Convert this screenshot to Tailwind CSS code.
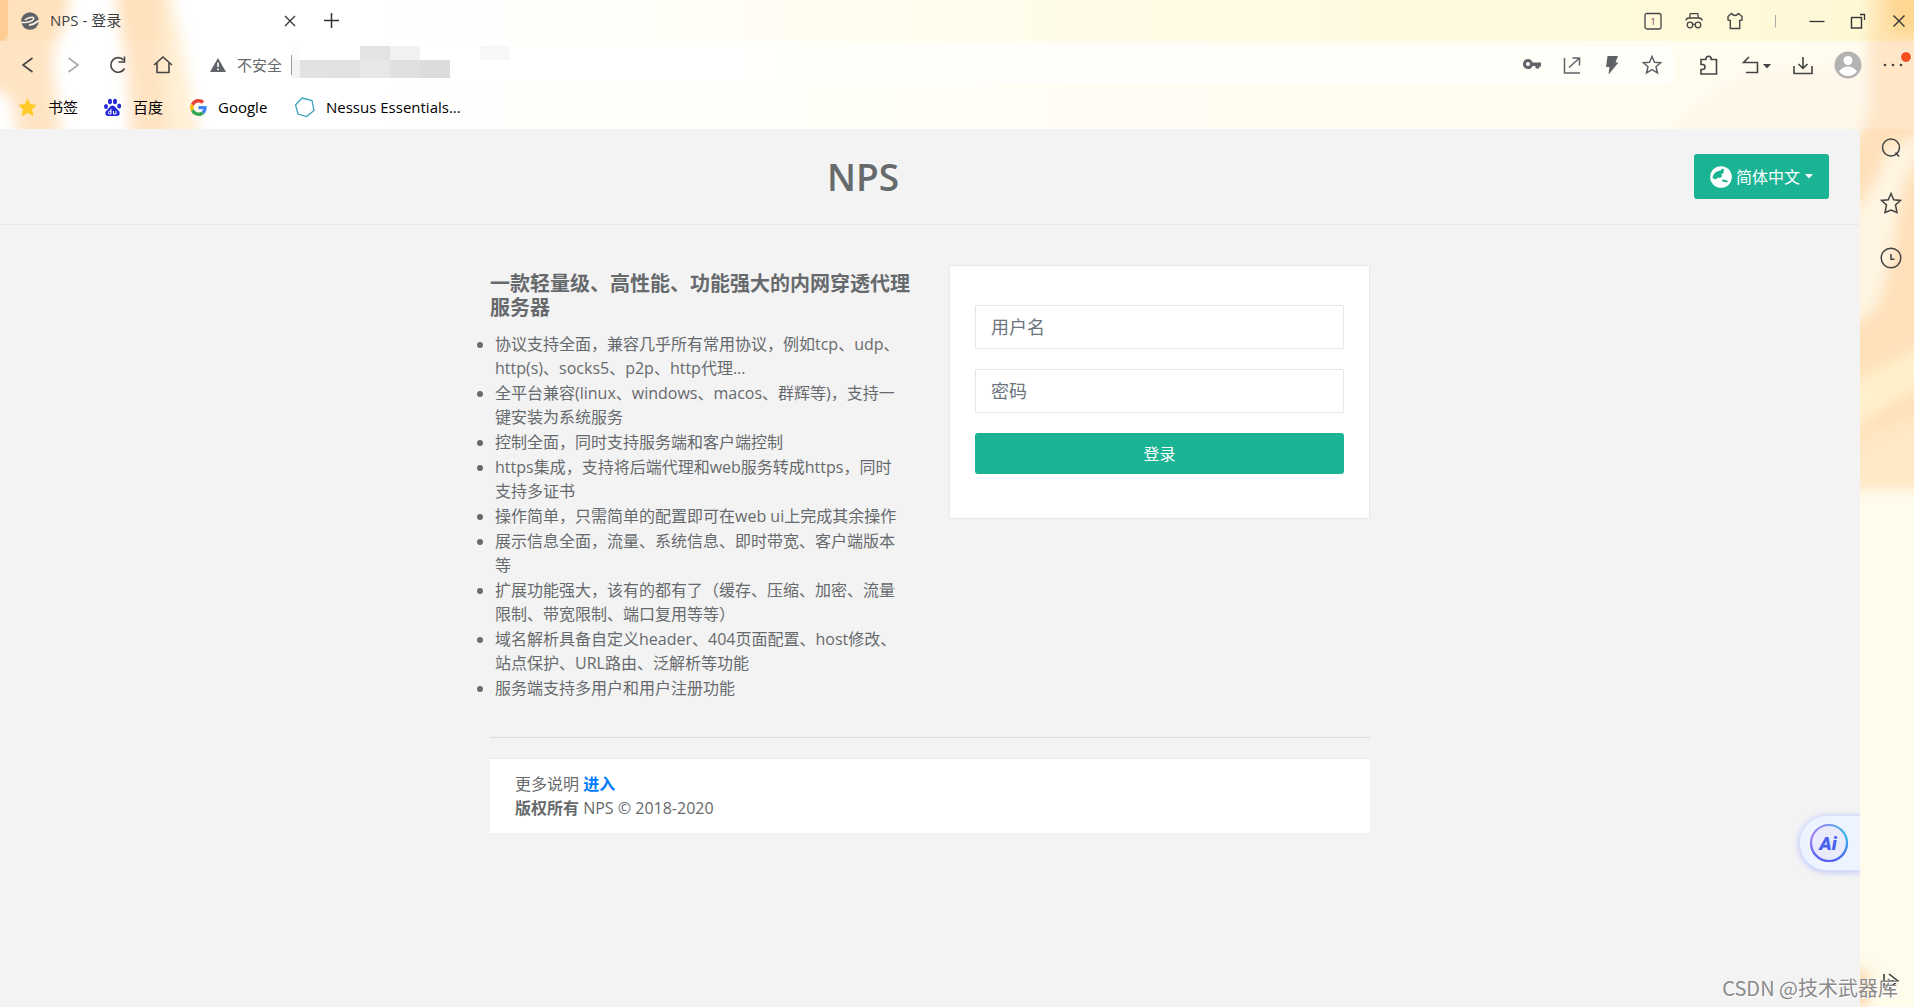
<!DOCTYPE html>
<html lang="zh-CN">
<head>
<meta charset="utf-8">
<meta name="viewport" content="width=device-width, initial-scale=1">
<title>NPS - 登录</title>
<script src="https://cdn.jsdelivr.net/npm/@tailwindcss/browser@4"></script>
</head>
<body class="relative flex min-h-screen flex-col overflow-x-hidden bg-linear-to-r from-white from-20% via-[#fffdf0] via-60% to-[#fffcec] font-['Open_Sans','Noto_Sans_CJK_SC',sans-serif] text-[#676a6c]">

<!-- Browser theme artwork -->
<svg class="absolute left-0 top-0 -z-10" width="260" height="129" aria-hidden="true">
  <defs><filter id="soft" x="-30%" y="-30%" width="160%" height="160%"><feGaussianBlur stdDeviation="7"/></filter></defs>
  <g filter="url(#soft)" fill="#ffdeb5">
    <path d="M-30-30H72L66 25Q48 45 54 80L64 160H22L12 100-30 75Z"/>
    <path d="M112-30H165Q175 20 185 60 190 100 205 160H130Q130 90 124 50Z"/>
    <path d="M160-30Q185 30 200 160H170Z" fill="#ffeccb"/>
  </g>
</svg>
<svg class="absolute right-0 top-0 -z-10" width="260" height="1007" aria-hidden="true">
  <defs><filter id="haze" x="-30%" y="-10%" width="160%" height="120%"><feGaussianBlur stdDeviation="7"/></filter></defs>
  <g filter="url(#haze)">
    <path d="M0 150Q60 70 130 70L215 60V150Z" fill="#fff6e4"/>
    <path d="M222-40H300V490H190V150Q218 130 216 90 210 40 222-40Z" fill="#ffe0b9"/>
    <path d="M232-30H300V35H236Z" fill="#ffcd8b"/>
    <path d="M300 120Q256 150 244 210 240 260 222 310L190 330V220Q225 190 232 150Z" fill="#fff5e2"/>
    <path d="M300 325Q240 365 190 385V440Q250 385 300 375Z" fill="#fff1cc"/>
    <path d="M300 405Q240 420 190 450V490H300Z" fill="#ffe8c6"/>
    <path d="M190 497H300V980H190Z" fill="#fffcec"/>
    <path d="M195 970H214V1007H195Z" fill="#ffd6a8"/>
  </g>
</svg>

<!-- Title bar -->
<header class="flex h-[41px] items-center bg-linear-to-r from-transparent from-30% to-[#fff0a0]/30 pr-[6px]">
  <div class="h-full w-2 rounded-br-lg bg-[#ffc684]/70"></div>
  <div class="flex h-full w-[304px] items-center rounded-t-lg bg-white/10 pl-[13px] pr-4 text-[#3c4043]">
    <svg width="18" height="18" viewBox="0 0 18 18"><circle cx="9" cy="9" r="8.800" fill="#5f6368"/><path d="M3.800 7.800Q8 4.800 11.500 5.200 14 6 11.500 8.300 9 10 4.500 10.500" fill="none" stroke="#fff0dd" stroke-width="1.500"/><path d="M18 8.500Q13 12.600 8 13.200" fill="none" stroke="#fff0dd" stroke-width="1.800"/><path d="M0 10.500 4.500 10.500" stroke="#fff0dd" stroke-width="1.500"/></svg>
    <span class="ml-[11px] flex-1 text-[15px]">NPS - 登录</span>
    <button aria-label="关闭标签页"><svg width="12" height="12" viewBox="0 0 12 12"><path d="M1 1 11 11M11 1 1 11" stroke="#333" stroke-width="1.300"/></svg></button>
  </div>
  <button aria-label="新建标签页" class="ml-3"><svg width="15" height="15" viewBox="0 0 15 15"><path d="M7.500 0V15M0 7.500H15" stroke="#333" stroke-width="1.500"/></svg></button>
  <div class="ml-auto flex items-center gap-[23px]">
    <button aria-label="标签页数量"><svg width="18" height="18" viewBox="0 0 18 18"><rect x="1" y="1.500" width="16" height="15.500" rx="2" fill="none" stroke="#444" stroke-width="1.300"/><text x="9" y="12.500" font-size="9" text-anchor="middle" fill="#7a3050">1</text></svg></button>
    <button aria-label="无痕模式"><svg width="18" height="18" viewBox="0 0 18 18" fill="none" stroke="#444" stroke-width="1.300"><path d="M1 8.500Q1 6 4.500 6L5.300 1.700H12.700L13.500 6Q17 6 17 8.500M4 6H14"/><circle cx="5" cy="13" r="2.800"/><circle cx="13" cy="13" r="2.800"/><path d="M7.800 12.500Q9 11.800 10.200 12.500"/></svg></button>
    <button aria-label="主题"><svg width="18" height="18" viewBox="0 0 18 18"><path d="M5.500 1.500Q9 5.500 12.500 1.500L16 4.500V8L13.700 8.500V16.500H4.300V8.500L2 8V4.500Z" fill="none" stroke="#444" stroke-width="1.400"/></svg></button>
    <svg width="18" height="18" viewBox="0 0 18 18"><path d="M8.500 3V15.500" stroke="#aaa" stroke-width="1"/></svg>
    <button aria-label="最小化"><svg width="18" height="18" viewBox="0 0 18 18"><path d="M1.500 9.500H16.500" stroke="#333" stroke-width="1.300"/></svg></button>
    <button aria-label="还原"><svg width="18" height="18" viewBox="0 0 18 18" fill="none" stroke="#333"><rect x="2.500" y="5.500" width="10" height="10.500" stroke-width="1.400"/><path d="M11 2.500H15.500V8" stroke-width="1.300"/></svg></button>
    <button aria-label="关闭"><svg width="18" height="18" viewBox="0 0 18 18"><path d="M3.500 3.500 14.500 14.500M14.500 3.500 3.500 14.500" stroke="#333" stroke-width="1.400"/></svg></button>
  </div>
</header>

<!-- Address row -->
<nav class="flex h-12 items-center bg-white/20 pl-[18px] pr-[2px]">
  <div class="flex gap-[25px]">
    <button aria-label="后退"><svg width="20" height="20" viewBox="0 0 20 20"><path d="M14.500 3 5 10 14.500 17" fill="none" stroke="#444" stroke-width="1.600"/></svg></button>
    <button aria-label="前进"><svg width="20" height="20" viewBox="0 0 20 20"><path d="M5.500 3 15 10 5.500 17" fill="none" stroke="#aaa" stroke-width="1.600"/></svg></button>
    <button aria-label="刷新"><svg width="20" height="20" viewBox="0 0 20 20"><path d="M16.500 13.500A7.300 7.300 0 1 1 15.500 5M16.500 1.500V7H10.500" fill="none" stroke="#444" stroke-width="1.600"/></svg></button>
    <button aria-label="主页"><svg width="20" height="20" viewBox="0 0 20 20"><path d="M1 10 10 2 19 10M4 8V17.500H16V8" fill="none" stroke="#444" stroke-width="1.600"/></svg></button>
  </div>
  <div class="ml-[22px] flex h-[38px] flex-1 items-center rounded-[10px] bg-white/60 pl-[15px] pr-[13px]">
    <svg width="16" height="16" viewBox="0 0 16 16"><path d="M8 1 16 15H0Z" fill="#5f6368"/><path d="M8 5.500V10M8 11.500V13.300" stroke="#fff" stroke-width="1.600"/></svg>
    <span class="ml-[11px] text-[15px]">不安全</span>
    <div class="ml-[9px] h-5 w-px bg-[#999]"></div>
    <svg width="218" height="38" viewBox="0 1 218 38" shape-rendering="crispEdges" aria-hidden="true">
      <path d="M0 0H8V15H0Z" fill="#fbfbfb"/><path d="M68 0H98V15H68Z" fill="#e2e4e4"/><path d="M98 0H128V15H98Z" fill="#f0f2f1"/><path d="M188 0H218V15H188Z" fill="#f7f7f7"/>
      <path d="M0 15H8V33H0Z" fill="#f3f3f3"/><path d="M8 15H38V33H8Z" fill="#e2e2e2"/><path d="M38 15H68V33H38Z" fill="#e0e2e1"/><path d="M68 15H98V33H68Z" fill="#e7e7e7"/><path d="M98 15H128V33H98Z" fill="#e0e0e0"/><path d="M128 15H158V33H128Z" fill="#dcdcdc"/>
    </svg>
    <div class="ml-auto flex gap-5">
      <button aria-label="密码"><svg width="20" height="20" viewBox="0 0 20 20"><path fill-rule="evenodd" d="M6 4A5 5 0 0 1 10.600 7.500H19V11.500H17.300V13.500H13.500V11H10.600A5 5 0 1 1 6 4M6 7A2 2 0 1 0 6 11 2 2 0 1 0 6 7Z" fill="#5f6368"/></svg></button>
      <button aria-label="分享"><svg width="20" height="20" viewBox="0 0 20 20"><path d="M2.500 3V18H18M7 12.500 17 3.500M10.500 3H17.500V10.500" fill="none" stroke="#5f6368" stroke-width="1.500"/></svg></button>
      <button aria-label="极速模式"><svg width="20" height="20" viewBox="0 0 20 20"><path d="M5.500 1H16L13.500 7.500H16.500L6.500 19.500 7.500 12H4Z" fill="#5f6368"/></svg></button>
      <button aria-label="收藏此页"><svg width="20" height="20" viewBox="0 0 20 20"><path d="M10 1.500 12.500 7.200 18.700 7.700 14 11.800 15.500 18 10 14.700 4.500 18 6 11.800 1.300 7.700 7.500 7.200Z" fill="none" stroke="#5f6368" stroke-width="1.500"/></svg></button>
    </div>
  </div>
  <div class="flex items-center pl-[24px]">
    <button aria-label="扩展"><svg width="20" height="20" viewBox="0 0 20 20"><path d="M2 4.500H6.800V4A2.700 2.700 0 0 1 12.200 4V4.500H17.500V19H2V14.500H3.500A2.500 2.500 0 0 0 3.500 9.500H2Z" fill="none" stroke="#444" stroke-width="1.600"/></svg></button>
    <button aria-label="恢复标签页" class="ml-[22px]"><svg width="32" height="20" viewBox="0 0 32 20"><path d="M8 2 2.500 7.500H16.500V17.500H5" fill="none" stroke="#444" stroke-width="1.600"/><path d="M22 9H30L26 13.500Z" fill="#444"/></svg></button>
    <button aria-label="下载" class="ml-5"><svg width="20" height="20" viewBox="0 0 20 20"><path d="M1 11V18.500H19V11M10 2V13M5.500 9 10 13.300 14.500 9" fill="none" stroke="#444" stroke-width="1.600"/></svg></button>
    <button aria-label="账户" class="ml-[21px]"><svg width="28" height="28" viewBox="0 0 28 28"><circle cx="14" cy="14" r="13.500" fill="#b3b3b3"/><circle cx="14" cy="9.500" r="4.500" fill="#fff"/><path d="M5 20.500Q9 15.500 14 15.500T23 20.500Q19 25 14 25T5 20.500Z" fill="#fff"/></svg></button>
    <button aria-label="更多" class="ml-5"><svg width="30" height="28" viewBox="0 0 30 28"><g fill="#444"><circle cx="3" cy="14" r="1.300"/><circle cx="11" cy="14" r="1.300"/><circle cx="19" cy="14" r="1.300"/></g><circle cx="24" cy="6" r="5.500" fill="#f4511e" stroke="#fff"/></svg></button>
  </div>
</nav>

<!-- Bookmarks -->
<nav class="flex h-10 items-center bg-white/20 pb-1 pl-[18px] text-[15px] text-black">
  <a href="#" class="flex w-[85px] items-center gap-[11px]"><svg width="19" height="19" viewBox="0 0 20 20"><path d="M10 1 12.700 7 19 7.600 14.300 12 15.700 18.500 10 15.200 4.300 18.500 5.700 12 1 7.600 7.300 7Z" fill="#ffca28" stroke="#ffca28"/></svg>书签</a>
  <a href="#" class="flex w-[85px] items-center gap-[11px]"><svg width="19" height="19" viewBox="0 0 19 19"><rect width="19" height="19" rx="3" fill="#fff"/><g fill="#2529d8"><ellipse cx="3" cy="8.500" rx="2" ry="2.600"/><ellipse cx="7" cy="3.500" rx="2" ry="2.800"/><ellipse cx="12" cy="3.500" rx="2" ry="2.800"/><ellipse cx="16.200" cy="8" rx="2" ry="2.600"/><path d="M9.500 7.500Q12 7.500 13 10L16 13Q18 17 14.500 18H4.500Q1 17 3 13L6 10Q7 7.500 9.500 7.500Z"/></g><path d="M8 11V16H6.500Q5.500 16 5.500 14.700T6.500 13.300H8M10.500 13V16H13V13" fill="none" stroke="#fff"/></svg>百度</a>
  <a href="#" class="flex w-[106px] items-center gap-[11px]"><svg width="19" height="19" viewBox="-6 -3 54 54"><path fill="#EA4335" d="M24 9.500c3.540 0 6.710 1.220 9.210 3.600l6.850-6.850C35.900 2.380 30.470 0 24 0 14.620 0 6.510 5.380 2.560 13.220l7.980 6.190C12.430 13.720 17.740 9.500 24 9.500z"/><path fill="#4285F4" d="M46.980 24.550c0-1.570-.15-3.090-.38-4.550H24v9.020h12.940c-.58 2.960-2.260 5.480-4.780 7.180l7.730 6c4.510-4.180 7.090-10.360 7.090-17.650z"/><path fill="#FBBC05" d="M10.530 28.590c-.48-1.450-.76-2.990-.76-4.590s.27-3.140.76-4.590l-7.980-6.190C.92 16.460 0 20.120 0 24c0 3.880.92 7.540 2.560 10.780l7.970-6.190z"/><path fill="#34A853" d="M24 48c6.480 0 11.930-2.130 15.890-5.810l-7.730-6c-2.150 1.450-4.920 2.300-8.160 2.300-6.260 0-11.570-4.220-13.470-9.910l-7.980 6.190C6.510 42.620 14.620 48 24 48z"/></svg>Google</a>
  <a href="#" class="flex items-center gap-[11px]"><svg width="21" height="21" viewBox="0 0 21 21"><path d="M8 1 18 3.500 20 13.500 12.500 19.500 4 17 1.500 8Z" fill="none" stroke="#3fa3bd" stroke-width="1.300"/></svg>Nessus Essentials...</a>
</nav>

<div class="flex flex-1">
  <!-- Login page -->
  <div class="relative min-w-0 flex-1 overflow-hidden rounded-tr-[4px] bg-[#f3f3f4] text-[16px] leading-6">
    <header class="flex h-24 items-center border-b border-[#e7eaec] pl-8 pr-[31px]">
      <h1 class="flex-1 text-center text-[37px] font-semibold">NPS</h1>
      <button class="flex h-[45px] items-center rounded-[3px] bg-[#1ab394] px-4 text-white">
        <svg width="22" height="22" viewBox="0 0 22 22"><circle cx="11" cy="11" r="10.800" fill="#fff"/><path d="M12.500 2.500 10.500 4.500Q6 5 4 8 2.500 10 2.500 12L5.500 13.500 8 11.500 10 12 12.500 10 11 8.500 13.500 7 14 3.500ZM11.500 14 14 13.500 18 15 17 16.500 12.500 15.500Z" fill="#1ab394"/></svg>
        <span class="ml-1">简体中文</span>
        <svg class="ml-[5px]" width="8" height="5" viewBox="0 0 8 5"><path d="M0 0H8L4 4.500Z" fill="#fff"/></svg>
      </button>
    </header>

    <main class="mx-auto max-w-[880px] pt-10">
      <div class="grid grid-cols-2 gap-[38px]">
        <section class="pt-[7px]">
          <h3 class="mb-3 text-[20px] font-bold leading-6">一款轻量级、高性能、功能强大的内网穿透代理服务器</h3>
          <ul class="list-disc space-y-px pl-[5px] pr-1">
            <li>协议支持全面，兼容几乎所有常用协议，例如tcp、udp、http(s)、socks5、p2p、http代理...</li>
            <li>全平台兼容(linux、windows、macos、群辉等)，支持一键安装为系统服务</li>
            <li>控制全面，同时支持服务端和客户端控制</li>
            <li>https集成，支持将后端代理和web服务转成https，同时支持多证书</li>
            <li>操作简单，只需简单的配置即可在web ui上完成其余操作</li>
            <li>展示信息全面，流量、系统信息、即时带宽、客户端版本等</li>
            <li>扩展功能强大，该有的都有了（缓存、压缩、加密、流量限制、带宽限制、端口复用等等）</li>
            <li>域名解析具备自定义header、404页面配置、host修改、站点保护、URL路由、泛解析等功能</li>
            <li>服务端支持多用户和用户注册功能</li>
          </ul>
        </section>
        <form class="flex flex-col gap-5 self-start border border-[#e7eaec] bg-white px-[25px] pb-11 pt-[39px]">
          <input type="text" aria-label="用户名" placeholder="用户名" class="h-11 rounded-[1px] border border-[#e5e6e7] px-[15px] text-[18px] placeholder:text-[#6c757d]">
          <input type="password" aria-label="密码" placeholder="密码" class="h-11 rounded-[1px] border border-[#e5e6e7] px-[15px] text-[18px] placeholder:text-[#6c757d]">
          <button type="button" class="h-[41px] rounded-[3px] bg-[#1ab394] text-white">登录</button>
        </form>
      </div>
      <hr class="mb-5 mt-[37px] border-[#dcdcdc]">
      <footer class="border-t border-[#e7eaec] bg-white px-[25px] py-[13px]">
        <p>更多说明 <a href="#" class="font-bold text-[#007bff]">进入</a></p>
        <p><strong>版权所有</strong> NPS © 2018-2020</p>
      </footer>
    </main>

    <!-- Floating assistant tab -->
    <button aria-label="AI 助手" class="absolute bottom-[136px] right-0 flex h-14 w-[61px] items-center rounded-l-full border border-r-0 border-[#d3e3ff] bg-[#edf4ff] pl-[9px] shadow-[0_1px_6px_#b9bff5]">
      <svg width="40" height="40" viewBox="0 0 40 40"><defs><linearGradient id="ring" x1="0" y1="0" x2="1" y2="0.300"><stop offset="0" stop-color="#b07cf0"/><stop offset="1" stop-color="#2fb6ee"/></linearGradient><linearGradient id="ring2" x1="0" y1="0" x2="0" y2="1"><stop offset="0.300" stop-color="#5a5cf0" stop-opacity="0"/><stop offset="1" stop-color="#5a5cf0"/></linearGradient></defs><circle cx="20" cy="20" r="18" fill="#e9ebfd" stroke="url(#ring)" stroke-width="2.200"/><circle cx="20" cy="20" r="18" fill="none" stroke="url(#ring2)" stroke-width="2.200"/><text x="19" y="27" text-anchor="middle" font-family="Roboto, sans-serif" font-size="19" font-weight="900" font-style="italic" fill="#4a63ee">Ai</text></svg>
    </button>
  </div>

  <!-- Browser sidebar -->
  <aside class="flex w-[54px] flex-col items-center gap-[33px] pb-[15px] pl-[7px] pt-2">
    <button aria-label="搜索"><svg width="22" height="22" viewBox="0 0 22 22"><circle cx="11" cy="10.500" r="8.500" fill="none" stroke="#444" stroke-width="1.500"/><path d="M15.500 15.500 19 19.500" stroke="#444" stroke-width="1.600"/></svg></button>
    <button aria-label="收藏"><svg width="22" height="22" viewBox="0 0 22 22"><path d="M11 1.500 13.700 7.700 20.500 8.400 15.500 13 17 20.500 11 18 5 20.500 6.500 13 1.500 8.400 8.300 7.700Z" fill="none" stroke="#444" stroke-width="1.500"/></svg></button>
    <button aria-label="历史"><svg width="22" height="22" viewBox="0 0 22 22"><circle cx="11" cy="11" r="9.800" fill="none" stroke="#444" stroke-width="1.500"/><path d="M11 7V12.300H14.500" fill="none" stroke="#444" stroke-width="1.500"/></svg></button>
    <button aria-label="收起侧栏" class="mt-auto"><svg width="22" height="22" viewBox="0 0 22 22"><path d="M4 4V18M9 4 18 11 9 18M8 11H14" fill="none" stroke="#333" stroke-width="1.500"/></svg></button>
  </aside>
</div>

<div class="pointer-events-none absolute bottom-1 right-4 font-['Noto_Sans_CJK_SC',sans-serif] text-[20px] leading-[30px] text-[#8a8a8a] [text-shadow:1px_1px_0_#fff]">CSDN @技术武器库</div>
</body>
</html>
